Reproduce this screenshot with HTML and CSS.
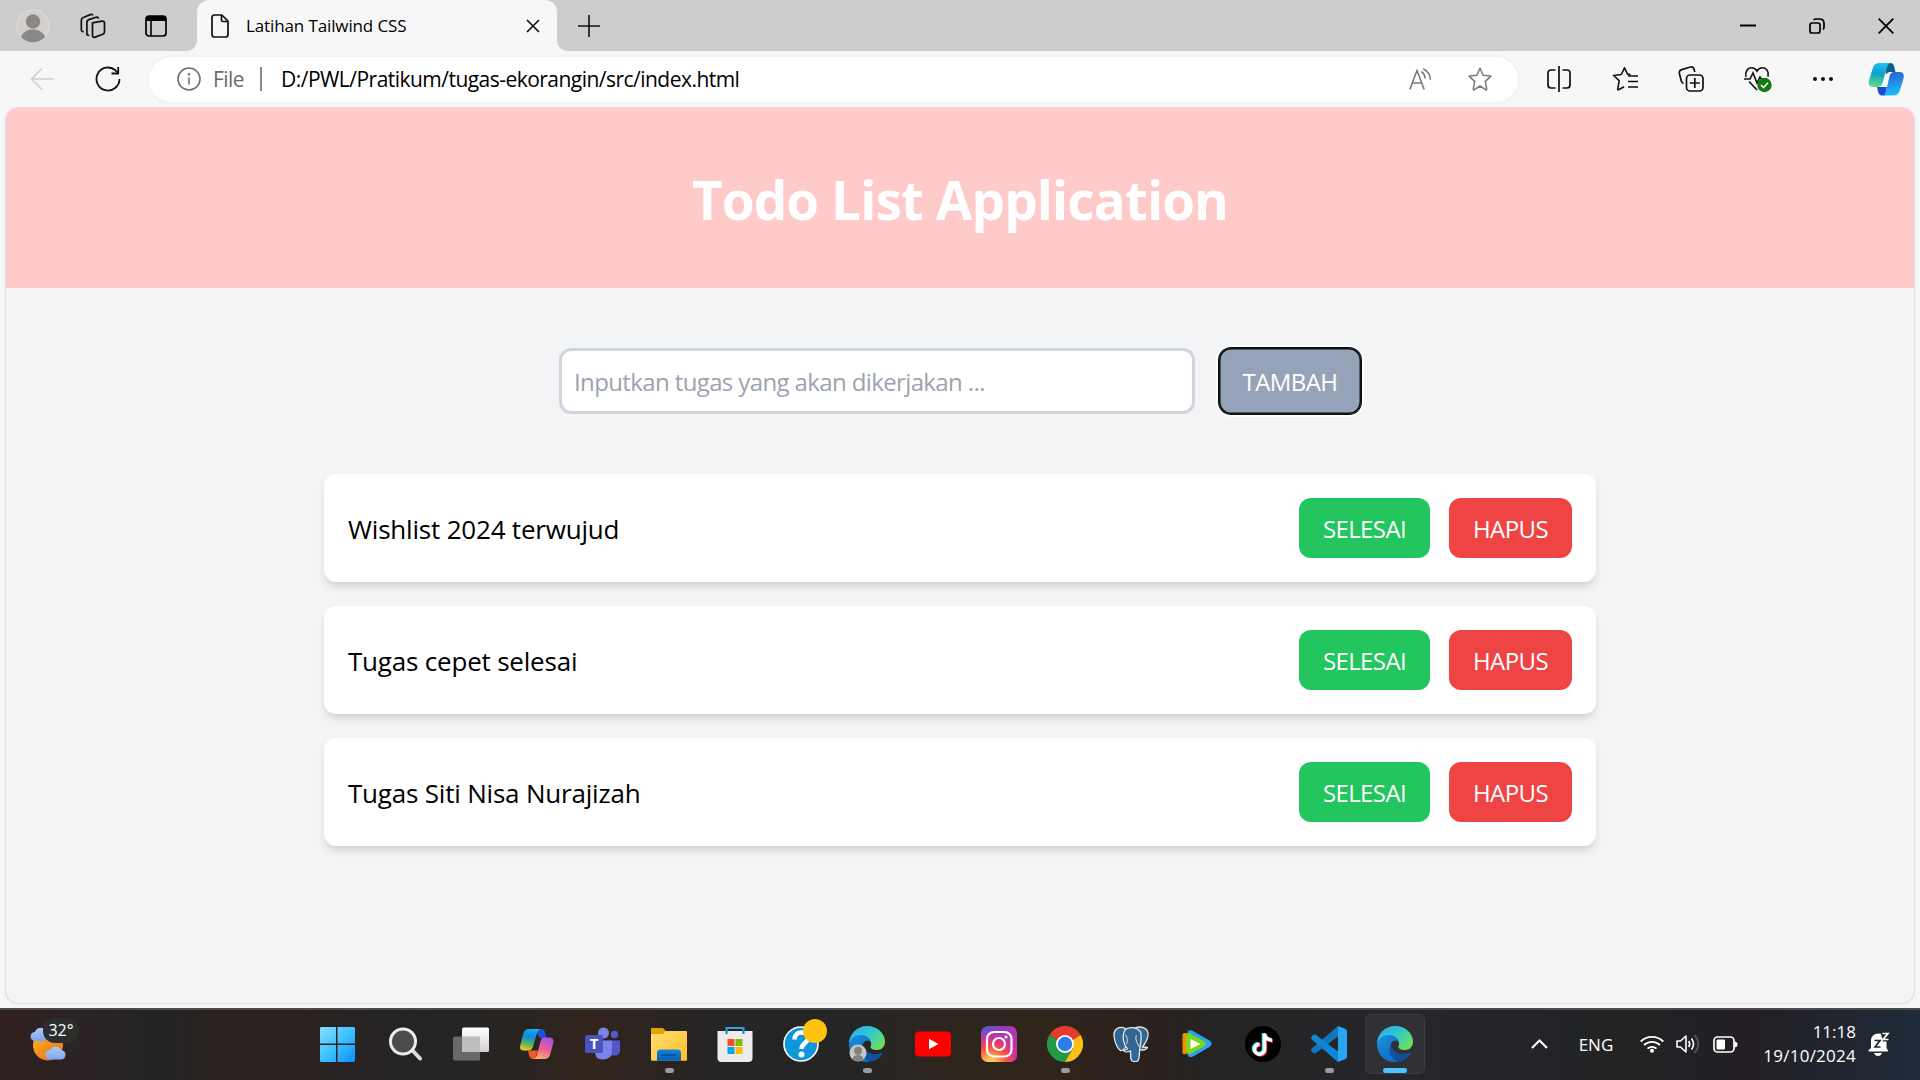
FILE: index.html
```html
<!DOCTYPE html>
<html lang="id">
<head>
<meta charset="utf-8">
<title>Latihan Tailwind CSS</title>
<link rel="stylesheet" href="styles.css">
</head>
<body>
<svg class="defs" width="0" height="0" aria-hidden="true">
  <defs>
    <linearGradient id="edgeTop" x1="0" y1="0" x2="1" y2=".7"><stop offset="0" stop-color="#2ba8f0"/><stop offset=".5" stop-color="#30c5d4"/><stop offset="1" stop-color="#6be05a"/></linearGradient>
    <linearGradient id="edgeLeft" x1="0" y1="0" x2=".8" y2="1"><stop offset="0" stop-color="#1b8fdd"/><stop offset="1" stop-color="#0c6bc4"/></linearGradient>
    <symbol id="edge" viewBox="0 0 36 36">
      <path d="M0 18C0 8 8 0 18 0c10.500 0 18 7.500 18 15.500C36 21 32.500 24 28 24c-4 0-7-1.300-6.500-3.500 2-3.500-.5-7.500-5.500-9C9 9.500 2 12.500 0 18z" fill="url(#edgeTop)"/>
      <path d="M0 18C1.500 12 7 8.500 12.500 9c5 .5 9.500 3.500 9.500 8-.5-2-2-2.800-4-2.500-3 .5-5 3.500-4.500 7C14.500 28 19 31 24 32.500c-2 2.500-4.500 3.500-7 3.500C7.500 36 0 28 0 18z" fill="url(#edgeLeft)"/>
      <path d="M13.500 19.500c-2.500 5 0 13 7.500 16.200C27 35.300 32 31 33.500 27.500c.4-1-.3-1.200-1-.8C28 29 21 28.500 17.500 25c-2-2-2-4-4-5.500z" fill="#114f9e"/>
    </symbol>
  </defs>
</svg>

<header class="titlebar">
  <svg class="avatar" width="34" height="34" viewBox="0 0 34 34"><circle cx="17" cy="17" r="16" fill="#d3d0cb" stroke="#dedcd9" stroke-width="1.200"/><circle cx="17" cy="12.500" r="7.200" fill="#8a8784"/><path d="M5 28c2-5 6.500-7.500 12-7.500S27 23 29 28a16 16 0 0 1-24 0z" fill="#8a8784"/></svg>
  <svg class="workspaces" width="26" height="26" viewBox="0 0 26 26" fill="none" stroke="#111" stroke-width="1.700"><path d="M12.500 9.800l9.300-1.700q2.700-.3 2.700 2v8.600q0 1.800-1.800 2.500l-7.500 2.900q-2.700.8-2.700-1.600z"/><path d="M9.300 22.200q-2.400.6-2.400-1.800V9.300q0-2 2-2.700l7-2.300q2.300-.5 2.600 1.300"/><path d="M3.700 18.500Q1.300 18.800 1.300 16.500V7.200q0-2 2-2.700l7-2.900q2-.7 2.500.9"/></svg>
  <svg class="tab-actions" width="22" height="22" viewBox="0 0 22 22"><rect x="1" y="1" width="20" height="20" rx="3" fill="none" stroke="#000" stroke-width="1.700"/><path d="M1 6V4a3 3 0 0 1 3-3h14a3 3 0 0 1 3 3v2z"/><path d="M6 6v15" stroke="#000" stroke-width="1.600"/></svg>
  <div class="tab">
    <svg width="18" height="24" viewBox="0 0 18 24" fill="none" stroke="#111" stroke-width="1.700"><path d="M3.500 1h7.300L17 7.200V20.500Q17 23 14.500 23h-11Q1 23 1 20.500v-17Q1 1 3.500 1z"/><path d="M10.500 1v5q0 1.500 1.500 1.500h5"/></svg>
    <span class="tab-title">Latihan Tailwind CSS</span>
    <svg class="tab-close" width="14" height="14" viewBox="0 0 14 14" stroke="#111" stroke-width="1.600"><path d="M1 1l12 12M13 1L1 13"/></svg>
  </div>
  <svg class="new-tab" width="22" height="22" viewBox="0 0 22 22" stroke="#111" stroke-width="1.600"><path d="M11 0v22M0 11h22"/></svg>
  <div class="window-controls">
    <svg width="16" height="16" viewBox="0 0 16 16"><path d="M0 7.500h16" stroke="#000" stroke-width="2"/></svg>
    <svg width="16" height="16" viewBox="0 0 16 16" fill="none" stroke="#000" stroke-width="1.700"><rect x="1" y="5" width="10" height="10" rx="2"/><path d="M4.500 2Q5.500 1 7 1h3.500Q15 1 15 5.500V9q0 1.500-1 2.500"/></svg>
    <svg width="16" height="16" viewBox="0 0 16 16" stroke="#000" stroke-width="1.800"><path d="M.7.7l14.600 14.600M15.300.7L.7 15.300"/></svg>
  </div>
</header>

<nav class="toolbar">
  <svg class="back" width="24" height="22" viewBox="0 0 24 22" fill="none" stroke="#cfcfcf" stroke-width="1.600"><path d="M24 11H1.500M12 .5L1.500 11 12 21.500"/></svg>
  <svg class="reload" width="26" height="26" viewBox="0 0 26 26" fill="none" stroke="#111" stroke-width="1.800"><path d="M24.500 13A11.500 11.500 0 1 1 20.500 4.300l2.500 2.700"/><path d="M23.200 1v6.500H16.500"/></svg>
  <div class="address">
    <svg class="info" width="24" height="24" viewBox="0 0 24 24"><circle cx="12" cy="12" r="11" fill="none" stroke="#6f6f6f" stroke-width="1.600"/><path d="M12 10.500v7" stroke="#6f6f6f" stroke-width="1.600"/><circle cx="12" cy="7.200" r="1.200" fill="#6f6f6f"/></svg>
    <span class="scheme">File</span>
    <span class="divider"></span>
    <span class="url">D:/PWL/Pratikum/tugas-ekorangin/src/index.html</span>
    <svg class="read-aloud" width="24" height="22" viewBox="0 0 24 22" fill="none" stroke="#7a7a7a" stroke-width="1.600"><path d="M.8 21.500L8 2.500l7.200 19M3.300 15h9.400"/><path d="M12.500 3.500q3.300 2.300 3.700 7"/><path d="M14.200.8q7 3.500 7.200 11"/></svg>
    <svg class="star" width="24" height="24" viewBox="0 0 24 24" fill="none" stroke="#7a7a7a" stroke-width="1.500" stroke-linejoin="round"><path d="M12 1.200l3.200 7 7.700.9-5.600 5.300 1.500 7.900q0 .8-.8.500L12 19l-6 3.800q-.9.300-.8-.5l1.500-7.900L1.100 9.100l7.700-.9z"/></svg>
  </div>
  <div class="actions">
    <svg width="26" height="26" viewBox="0 0 26 26" fill="none" stroke="#111" stroke-width="1.700"><path d="M13 0v26M9.500 4H5Q2 4 2 7v12q0 3 3 3h4.500M16.500 4H21q3 0 3 3v12q0 3-3 3h-4.500"/></svg>
    <svg width="26" height="26" viewBox="0 0 26 26" fill="none" stroke="#111" stroke-width="1.600" stroke-linejoin="round"><path d="M18.500 8.600l-3-.5L12.500 1.800 9.300 8.500l-7.800 1 5.700 5.200-1.500 8.500q0 .9.900.5l5.500-3"/><path d="M16 10h10M16 15.500h10M16 21h10"/></svg>
    <svg width="26" height="26" viewBox="0 0 26 26" fill="none" stroke="#111" stroke-width="1.700"><rect x="8.500" y="9" width="16.500" height="16" rx="3.500"/><path d="M16.800 12v10M11.800 17h10"/><path d="M5.500 17.500Q3.800 17 3.300 15L1.400 7.500Q.8 4.500 3.700 3.600L12.500 1q2.800-.5 3.600 2.200L16.800 6"/></svg>
    <svg width="28" height="28" viewBox="0 0 28 28" fill="none" stroke="#111" stroke-width="1.600"><path d="M2 12C.8 7 3.500 2.700 7.500 2.700c3 0 4.500 1.500 5.500 3.300 1-1.800 2.500-3.300 5.500-3.300 4 0 6.700 4.300 5.500 9"/><path d="M0 14h6l3-6 4 10 3-6 1.500 2H23M5 16.500l8 8.500"/><circle cx="20.500" cy="20" r="7.200" fill="#107c10" stroke="none"/><path d="M17 20l2.500 2.500 4.500-4.700" stroke="#fff"/></svg>
    <svg width="22" height="6" viewBox="0 0 22 6" fill="#111"><circle cx="3" cy="3" r="2"/><circle cx="11" cy="3" r="2"/><circle cx="19" cy="3" r="2"/></svg>
    <svg class="copilot" width="36" height="34" viewBox="0 0 36 34">
      <defs><linearGradient id="cpA" x1=".5" y1="0" x2=".4" y2="1"><stop offset="0" stop-color="#22bff5"/><stop offset=".45" stop-color="#0d9fc9"/><stop offset="1" stop-color="#5fe07d"/></linearGradient><linearGradient id="cpB" x1=".4" y1="0" x2=".6" y2="1"><stop offset="0" stop-color="#2a63d5"/><stop offset="1" stop-color="#19c0fa"/></linearGradient></defs>
      <path d="M17 1h6q2 0 3 3l1.500 6H22q-3 0-4 3z" fill="#0d5c8f"/>
      <path d="M9 25h10l-2 8.500h-3q-3 0-4-4z" fill="#1d4bd8"/>
      <path d="M11 1h12q-3 .5-4 4l-4.500 16q-1 4-5 4H5q-5.500 0-4-6.500L5 5.500Q6.500 1 11 1z" fill="url(#cpA)"/>
      <path d="M26 10h5q6 0 4.500 6.500L32 28q-1.500 5.500-7 5.500H14q3-.5 4-4l3.500-15q1-4.500 4.500-4.500z" fill="url(#cpB)"/>
    </svg>
  </div>
</nav>

<div class="viewport">
  <main class="page">
    <div class="hero"><h1>Todo List Application</h1></div>
    <form class="todo-form">
      <div class="field"><span class="placeholder">Inputkan tugas yang akan dikerjakan ...</span></div>
      <button type="button" class="btn btn-add">TAMBAH</button>
    </form>
    <ul class="todo-list">
      <li class="todo"><span class="task">Wishlist 2024 terwujud</span><button class="btn btn-done">SELESAI</button><button class="btn btn-delete">HAPUS</button></li>
      <li class="todo"><span class="task">Tugas cepet selesai</span><button class="btn btn-done">SELESAI</button><button class="btn btn-delete">HAPUS</button></li>
      <li class="todo"><span class="task">Tugas Siti Nisa Nurajizah</span><button class="btn btn-done">SELESAI</button><button class="btn btn-delete">HAPUS</button></li>
    </ul>
  </main>
</div>

<footer class="taskbar">
  <div class="weather">
    <svg width="40" height="36" viewBox="0 0 40 36">
      <defs><linearGradient id="sun" x1="0" y1="0" x2="1" y2="1"><stop offset="0" stop-color="#f8b62c"/><stop offset="1" stop-color="#ee6a10"/></linearGradient><linearGradient id="cloud" x1="0" y1="0" x2="0" y2="1"><stop offset="0" stop-color="#a9ccfa"/><stop offset="1" stop-color="#7ea5ee"/></linearGradient></defs>
      <circle cx="18" cy="18.500" r="15" fill="url(#sun)"/>
      <path d="M5 14a4.500 4.500 0 0 1 0-9 6 6 0 0 1 11-1v10z" fill="url(#cloud)"/>
      <path d="M20 32.500a4.600 4.600 0 0 1 0-9.300 6.500 6.500 0 0 1 11.500 0 4.700 4.700 0 0 1 0 9.300z" fill="url(#cloud)"/>
    </svg>
    <span class="temp">32°</span>
  </div>
  <div class="apps">
    <div class="app app-start"><svg width="36" height="36" viewBox="0 0 36 36"><defs><linearGradient id="win" x1="0" y1="0" x2="1" y2="1"><stop offset="0" stop-color="#8adcff"/><stop offset=".5" stop-color="#3cc2ff"/><stop offset="1" stop-color="#0a90f5"/></linearGradient></defs><path d="M2 1h15v16.500H1V2zM18.500 1H35l1 1v15.500H18.500zM1 19h16v17H2l-1-1zM18.500 19H36v16l-1 1H18.500z" fill="url(#win)"/></svg></div>
    <div class="app"><svg width="36" height="36" viewBox="0 0 36 36"><path d="M25.500 24.500l7.500 8" stroke="#d9dbde" stroke-width="4" stroke-linecap="round"/><circle cx="16" cy="15.500" r="12.500" fill="#4a4b4c" stroke="#ececec" stroke-width="3"/></svg></div>
    <div class="app"><svg width="36" height="36" viewBox="0 0 36 36"><defs><linearGradient id="tv" x1="0" y1="0" x2="0" y2="1"><stop offset="0" stop-color="#fff"/><stop offset="1" stop-color="#cfcfcf"/></linearGradient></defs><rect x="0" y="10.500" width="27" height="24" rx="1.500" fill="#686868"/><rect x="9" y="1.500" width="27" height="24.500" rx="1.500" fill="url(#tv)"/><path d="M9 10.500h18V26H10.500L9 24.500z" fill="#bdbdbd"/></svg></div>
    <div class="app"><svg width="36" height="36" viewBox="0 0 36 36"><defs><linearGradient id="c1" x1=".5" y1="0" x2=".3" y2="1"><stop offset="0" stop-color="#12b0f5"/><stop offset=".35" stop-color="#1486de"/><stop offset=".7" stop-color="#5ab65c"/><stop offset="1" stop-color="#f5c916"/></linearGradient><linearGradient id="c2" x1=".6" y1="0" x2=".3" y2="1"><stop offset="0" stop-color="#a452e8"/><stop offset=".5" stop-color="#ee5c96"/><stop offset="1" stop-color="#ffae6a"/></linearGradient></defs><path d="M15 3h7q3 0 4 3l1.500 6H21z" fill="#1e50d8"/><path d="M9 24.500h10l-3 8.500h-2q-3 0-4-4z" fill="#f05a2a"/><path d="M10 3h12q-3 .5-4 4l-4 13.500q-1 4-5 4H5q-5 0-3.800-5L4.500 7Q6 3 10 3z" fill="url(#c1)"/><path d="M25 11.500h5q5.500 0 4.300 5.500L31 29q-1.200 4-5.500 4H14q3-.5 4-4l3.500-13.500q1-4 3.500-4z" fill="url(#c2)"/></svg></div>
    <div class="app"><svg width="36" height="36" viewBox="0 0 36 36"><circle cx="18.500" cy="7" r="5.500" fill="#7b83eb"/><circle cx="29.500" cy="8.500" r="3.700" fill="#5059c9"/><path d="M25 14.500h10v10q0 5-5.500 5H25z" fill="#5059c9"/><path d="M11 14.500h16v10.500q0 8-8.500 8.500T10 26z" fill="#7b83eb"/><rect x="0" y="9" width="18" height="18" rx="1.500" fill="#4b53bc"/><text class="teams-letter" x="9" y="22.500">T</text></svg></div>
    <div class="app running"><svg width="36" height="36" viewBox="0 0 36 36"><defs><linearGradient id="fo" x1="0" y1="0" x2="1" y2="1"><stop offset="0" stop-color="#ffde78"/><stop offset="1" stop-color="#fdbf23"/></linearGradient><linearGradient id="fb" x1="0" y1="0" x2="0" y2="1"><stop offset="0" stop-color="#1585d8"/><stop offset="1" stop-color="#0560b5"/></linearGradient></defs><path d="M0 3q0-1 1-1h10q1 0 2 1l2 2v4H0z" fill="#e3a000"/><path d="M0 8h12l3-3h20q1 0 1 1v28q0 .700-1 .700H1q-1 0-1-.7z" fill="url(#fo)"/><path d="M6 34.700V27q0-3.500 3.500-3.500h17q3.500 0 3.500 3.500v7.700z" fill="url(#fb)"/><path d="M10.500 29h15" stroke="#064b8c" stroke-width="1.500"/></svg></div>
    <div class="app"><svg width="36" height="36" viewBox="0 0 36 36"><path d="M9.500 8V2h17v6" fill="none" stroke="#26a4e6" stroke-width="2"/><path d="M.5 5h35v27q0 4-4 4h-27q-4 0-4-4z" fill="#ececec"/><path d="M9.500 5v3M26.500 5v3" stroke="#1080c8" stroke-width="2"/><path d="M10.500 13h7v7h-7z" fill="#f25022"/><path d="M18.500 13h7v7h-7z" fill="#7fba00"/><path d="M10.500 21h7v7h-7z" fill="#00a4ef"/><path d="M18.500 21h7v7h-7z" fill="#ffb900"/></svg></div>
    <div class="app"><svg class="overflow" width="36" height="36" viewBox="0 0 36 36"><circle cx="18" cy="18" r="17" fill="#0f97dc" stroke="#fff" stroke-width="1.600"/><path d="M11.500 13.500c0-4.500 3-7 7-7s6.500 2.200 6.500 5.500c0 5-6.500 5-6.500 11" fill="none" stroke="#fff" stroke-width="4.500"/><circle cx="18.500" cy="28.500" r="3" fill="#fff"/><circle cx="32" cy="5" r="12" fill="#ffc20e"/></svg></div>
    <div class="app running"><svg width="36" height="36" viewBox="0 0 36 36"><use href="#edge"/><circle cx="9" cy="27" r="8.500" fill="#c9c7c5"/><circle cx="9" cy="24.700" r="4" fill="#83807d"/><path d="M3.500 33q1-4 5.500-4t5.500 4a8.500 8.500 0 0 1-11 0z" fill="#83807d"/></svg></div>
    <div class="app"><svg width="36" height="36" viewBox="0 0 36 36"><rect y="5.500" width="36" height="25" rx="4" fill="#f00"/><path d="M14 12.700l9.500 5.300-9.500 5.300z" fill="#fff"/></svg></div>
    <div class="app"><svg width="36" height="36" viewBox="0 0 36 36"><defs><linearGradient id="igb" x1="0" y1="0" x2=".9" y2=".25"><stop offset="0" stop-color="#4a5bd6"/><stop offset="1" stop-color="#b532b0"/></linearGradient><radialGradient id="ig" cx=".27" cy="1.050" r="1"><stop offset="0" stop-color="#ffd755"/><stop offset=".15" stop-color="#ffc04f"/><stop offset=".45" stop-color="#f8543f"/><stop offset=".72" stop-color="#d0309a"/><stop offset="1" stop-color="#c036b5" stop-opacity="0"/></radialGradient></defs><rect width="36" height="36" rx="7" fill="url(#igb)"/><rect width="36" height="36" rx="7" fill="url(#ig)"/><g fill="none" stroke="#fff" stroke-width="2.200"><rect x="6" y="6" width="24.500" height="24.500" rx="7"/><circle cx="18" cy="18" r="6"/></g><circle cx="25" cy="11" r="1.600" fill="#fff"/></svg></div>
    <div class="app running"><svg width="36" height="36" viewBox="0 0 36 36"><path d="M2.400 9A18 18 0 0 1 33.600 9L18 18z" fill="#e33b2e"/><path d="M2.400 9A18 18 0 0 0 18 36l7.800-13.500L18 18z" fill="#229a48"/><path d="M33.600 9A18 18 0 0 1 18 36l7.800-13.500V9z" fill="#fbc116"/><path d="M18 9h15.600L26 14z" fill="#e33b2e"/><path d="M33.600 9H18v9h9z" fill="none"/><circle cx="18" cy="18" r="9" fill="#fff"/><circle cx="18" cy="18" r="7.200" fill="#2f7de9"/></svg></div>
    <div class="app"><svg width="36" height="36" viewBox="0 0 36 36" fill="#336791" stroke="#e4e8ec" stroke-width="1.300" stroke-linejoin="round"><path d="M12 2C5 0 .5 3.500 1 9.500c.3 5 3 13 6.500 15 2 .8 3.500-1.500 5-3l2-6z"/><path d="M22 2c6-2.500 12 0 13 5 .5 4-2.500 10-5.500 14l5 .5c-1 2.500-5.500 3-8 2z"/><path d="M12 4c3-3.500 12-3.500 15.500 2 1.500 5 .5 10-.5 15l-1 11c-.5 5-8 5-8.300-.5L17.500 25c-3 1.500-6 1-7-.5l4-1.500c-4-4-6-13-2.500-19z"/><path d="M23.500 9c-2 4 1 9 3 12M12.500 9c2.500 3 2 6 1 9" fill="none" stroke-width="1"/></svg></div>
    <div class="app"><svg width="36" height="36" viewBox="0 0 36 36"><path d="M3.500 8.500q0-2 4-1.500v21q-4 1-4-1.500z" fill="#ff8a00"/><path d="M8.500 7.500q0-4.500 4.500-3l17.500 10q4.500 3 0 6.500L14 30.500q-4.500 2-5.500-2z" fill="#2ba0f5"/><path d="M7 10q0-4 4-2.500L25 15q3.500 2.500 0 5.500L12 27.500q-4.500 1.500-5-2z" fill="#7bd818"/><path d="M11.500 13l10 5-10 5z" fill="#fff"/></svg></div>
    <div class="app"><svg width="36" height="36" viewBox="0 0 36 36"><circle cx="18" cy="18" r="18"/><g fill="none" stroke-width="3.500"><path d="M18.500 7v15.500a5 5 0 1 1-5-5M18.500 7q1 6 7.500 6.500" stroke="#25f4ee"/><path d="M20.500 8.500V24a5 5 0 1 1-5-5M20.500 8.500q1 6 7.500 6.500" stroke="#fe2c55"/><path d="M19.500 7.700v15.500a5 5 0 1 1-5-5M19.500 7.700q1 6 7.500 6.500" stroke="#fff"/></g></svg></div>
    <div class="app running"><svg width="36" height="36" viewBox="0 0 36 36"><path d="M27 0v10.500L5 27q-1.500 1-3-.5l-1.200-1q-1.500-1.500 0-3z" fill="#1177bb"/><path d="M.8 13.500q-1.500-1.500 0-3L2 9.300q1.500-1.300 3-.3l22 16.500V36z" fill="#0f86d6"/><path d="M27 0l7.500 3q1.500.8 1.500 2.500v25q0 1.700-1.500 2.500L27 36z" fill="#2aa5f3"/></svg></div>
    <div class="app active"><svg width="36" height="36"><use href="#edge"/></svg></div>
  </div>
  <div class="tray">
    <svg class="chevron" width="17" height="10" viewBox="0 0 17 10" fill="none" stroke="#fff" stroke-width="2"><path d="M1 9l7.500-7.500L16 9"/></svg>
    <span class="lang">ENG</span>
    <svg class="wifi" width="24" height="18" viewBox="0 0 24 18" fill="none" stroke="#fff" stroke-width="1.800"><path d="M.7 6.500a16 16 0 0 1 22.600 0M4 10.200a11.300 11.300 0 0 1 16 0M7.500 13.600a6.500 6.500 0 0 1 9 0"/><circle cx="12" cy="15.800" r="2" fill="#fff" stroke="none"/></svg>
    <svg class="volume" width="25" height="20" viewBox="0 0 25 20" fill="none" stroke="#fff" stroke-width="1.600" stroke-linejoin="round"><path d="M1 7h3.500L10 2v16l-5.500-5H1z"/><path d="M12.700 7q2 3 0 6M15.500 4.500q4 5.500 0 11"/><path d="M18.700 1q7 9 0 18" stroke="#5d5d60"/></svg>
    <svg class="battery" width="25" height="17" viewBox="0 0 25 17"><rect x="1" y="1" width="20" height="15" rx="3.500" fill="none" stroke="#fff" stroke-width="1.700"/><rect x="3.500" y="3.500" width="8.500" height="10" rx="1" fill="#fff"/><path d="M21.500 5.500q3 .3 3 3t-3 3z" fill="#fff"/></svg>
    <div class="clock"><span>11:18</span><span class="date">19/10/2024</span></div>
    <svg class="bell" width="22" height="24" viewBox="0 0 22 24"><path d="M3 16V9q0-7.500 8-7.500 7.500 0 7.500 7.500v7l1.500 2.500q.3 1-.7 1H1q-1-.2-.5-1.200z" fill="#fff"/><path d="M6 21h8q-1 3-4 3t-4-3z" fill="#fff"/><path d="M12.500 0H22v9.500h-7z" fill="#20262f"/><path d="M6.500 8.500H12l-5 6.500h5.500" fill="none" stroke="#20262f" stroke-width="1.700"/><path d="M14.500 1.500H20l-5 6h5.500" fill="none" stroke="#fff" stroke-width="1.700"/></svg>
  </div>
</footer>
</body>
</html>
```
FILE: styles.css
```css
* { box-sizing: border-box; }
body {
  margin: 0;
  width: 1920px;
  height: 1080px;
  overflow: hidden;
  display: grid;
  grid-template-rows: 51px 56px 901px 72px;
  background: #f7f7f7;
  font-family: "Open Sans", "Noto Sans", sans-serif;
  color: #000;
}
svg { display: block; flex: none; }
.defs { position: absolute; }
span, h1 { white-space: nowrap; }

/* title bar */
.titlebar { display: flex; align-items: center; background: #cdcdcd; padding-left: 16px; }
.workspaces { margin-left: 30px; }
.tab-actions { margin-left: 39px; }
.tab {
  position: relative;
  align-self: stretch;
  display: flex;
  align-items: center;
  width: 360px;
  margin-left: 30px;
  padding: 0 17px 0 14px;
  background: #f7f7f7;
  border-radius: 12px 12px 0 0;
}
.tab::before, .tab::after {
  content: "";
  position: absolute;
  bottom: 0;
  width: 10px;
  height: 10px;
}
.tab::before { left: -10px; background: radial-gradient(circle at 0 0, #cdcdcd 9.5px, #f7f7f7 10px); }
.tab::after { right: -10px; background: radial-gradient(circle at 100% 0, #cdcdcd 9.5px, #f7f7f7 10px); }
.tab-title { margin-left: 17px; font-size: 17px; letter-spacing: -.12px; }
.tab-close { margin-left: auto; }
.new-tab { margin-left: 21px; }
.window-controls { display: flex; gap: 53px; margin-left: auto; padding-right: 26px; }

/* toolbar */
.toolbar { display: flex; align-items: center; padding-left: 30px; }
.reload { margin-left: 41px; }
.address {
  display: flex;
  align-items: center;
  width: 1369px;
  height: 45px;
  margin-left: 28px;
  padding: 0 26px 0 28px;
  background: #fff;
  border-radius: 23px;
  box-shadow: 0 0 4px rgba(0, 0, 0, .06);
}
.scheme { margin-left: 12px; font-size: 21px; letter-spacing: -.55px; color: #6b6b6b; }
.divider { width: 2px; height: 24px; margin-left: 16px; background: #8a8a8a; }
.url { margin-left: 19px; font-size: 21px; letter-spacing: -.53px; }
.read-aloud { margin-left: auto; }
.star { margin-left: 35px; }
.actions { display: flex; align-items: center; gap: 40px; margin-left: 28px; }
.copilot { margin-left: -6px; }

/* page */
.viewport { display: flex; padding: 1px 6px 5px; }
.page {
  flex: 1;
  overflow: hidden;
  background: #f3f4f6;
  border-radius: 12px;
  box-shadow: 0 0 2px rgba(0, 0, 0, .3);
}
.hero { height: 180px; padding-top: 59px; background: #fecaca; text-align: center; }
h1 { margin: 0; font-size: 53px; line-height: 66px; font-weight: 700; letter-spacing: -.9px; color: #fff; }
.todo-form { display: flex; justify-content: center; gap: 24px; margin: 60px 0; }
.field {
  display: flex;
  align-items: center;
  width: 636px;
  height: 66px;
  padding: 2px 12px 0;
  background: #fff;
  border: 3px solid #d1d5db;
  border-radius: 12px;
}
.placeholder { font-size: 24px; line-height: 36px; letter-spacing: -.62px; color: #9ca3af; }
.btn {
  height: 60px;
  padding: 1px 0 0;
  border: 0;
  border-radius: 12px;
  font: 24px/36px "Open Sans", "Noto Sans", sans-serif;
  letter-spacing: -.6px;
  color: #fff;
  text-align: center;
}
.btn-add {
  width: 142px;
  height: 66px;
  background: #94a3b8;
  box-shadow: inset 0 0 0 1.5px #101010, 0 0 0 1px #101010, 0 0 0 3px #fff;
}
.todo-list {
  display: flex;
  flex-direction: column;
  gap: 24px;
  width: 1272px;
  margin: 0 auto;
  padding: 0;
  list-style: none;
}
.todo {
  display: flex;
  align-items: center;
  height: 108px;
  padding: 0 24px;
  background: #fff;
  border-radius: 12px;
  box-shadow: 0 6px 9px -1.5px rgba(0, 0, 0, .1), 0 3px 6px -3px rgba(0, 0, 0, .1);
}
.task { font-size: 26px; padding-top: 2px; letter-spacing: -.2px; }
.btn-done { width: 131px; margin-left: auto; background: #22c55e; }
.btn-delete { width: 123px; margin-left: 19px; background: #ef4444; }

/* taskbar */
.taskbar {
  display: flex;
  align-items: center;
  border-top: 2px solid #4a4a4a;
  background: linear-gradient(90deg, #30211f 0, #292326 110px, #222324 160px, #2c2220 220px, #2a2221 310px, #232426 430px, #2a2420 530px, #32241b 590px, #272423 690px, #242526 840px, #2e251c 960px, #30251b 1050px, #2a211e 1150px, #242423 1210px, #25262c 1420px, #222325 1600px, #231f24 1750px, #1e2b39 1920px);
  color: #fff;
}
.weather { position: relative; width: 80px; padding-left: 30px; }
.temp {
  position: absolute;
  left: 43px;
  top: -9px;
  width: 36px;
  height: 25px;
  border-radius: 12px;
  background: #2d2f2f;
  font-size: 16px;
  line-height: 24px;
  text-align: center;
}
.apps { display: flex; margin-left: 227px; }
.app {
  position: relative;
  display: grid;
  place-items: center;
  width: 60px;
  height: 60px;
  margin-right: 6px;
  margin-top: -2px;
}
.app-start { margin-right: 8px; }
.overflow { overflow: visible; }
.teams-letter { font: 700 15px "Open Sans", sans-serif; fill: #fff; text-anchor: middle; }
.running::after, .active::after {
  content: "";
  position: absolute;
  bottom: 1px;
  left: 25.5px;
  width: 9px;
  height: 5px;
  border-radius: 3px;
  background: #9b9b9b;
}
.active { border-radius: 6px; background: #303137; box-shadow: inset 0 0 0 1px #3b3c41; }
.active::after { left: 18px; width: 24px; background: #4cc2ff; }
.tray { display: flex; align-items: center; margin-left: auto; padding: 0 30px 2px 0; }
.lang { margin-left: 31px; font-size: 17px; }
.wifi { margin-left: 27px; }
.volume { margin-left: 12px; }
.battery { margin-left: 12px; }
.clock { display: flex; flex-direction: column; align-items: flex-end; margin-left: 25px; font-size: 17px; line-height: 24px; }
.date { letter-spacing: .25px; }
.bell { margin-left: 12px; }
```
